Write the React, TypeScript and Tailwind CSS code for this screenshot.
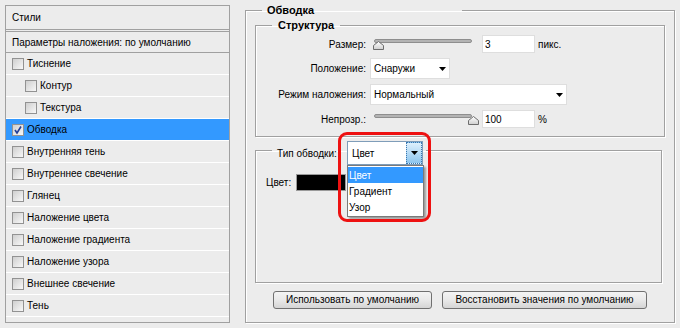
type StyleRow = { label: string; indent?: boolean; checked?: boolean };

const STYLE_ROWS: StyleRow[] = [
  { label: 'Тиснение' },
  { label: 'Контур', indent: true },
  { label: 'Текстура', indent: true },
  { label: 'Обводка', checked: true },
  { label: 'Внутренняя тень' },
  { label: 'Внутреннее свечение' },
  { label: 'Глянец' },
  { label: 'Наложение цвета' },
  { label: 'Наложение градиента' },
  { label: 'Наложение узора' },
  { label: 'Внешнее свечение' },
  { label: 'Тень' },
];

function CheckBox({ checked }: { checked?: boolean }) {
  return (
    <span className="flex items-center justify-center w-[12px] h-[12px] shrink-0 border border-[#929292] bg-linear-to-br from-[#cfcfcf] to-[#f8f8f8]">
      {checked && (
        <svg width="10" height="10" viewBox="0 0 10 10">
          <path d="M2 5 L4 8 L8 1.5" fill="none" stroke="#213e98" strokeWidth="1.6" />
        </svg>
      )}
    </span>
  );
}

function Arrow() {
  return (
    <svg width="7" height="4" viewBox="0 0 7 4" className="shrink-0">
      <path d="M0 0 H7 L3.5 4 Z" fill="#000" />
    </svg>
  );
}

// Photoshop style slider: dotted track with a house-shaped thumb
function Slider({ atEnd }: { atEnd?: boolean }) {
  return (
    <div className="relative w-[106px] h-[18px] shrink-0">
      <div className="absolute left-[1px] top-[4px] w-[98px] h-[4px] rounded-[2px] bg-[#b3b3b3] border border-[#8e8e8e]" />
      <svg
        width="11"
        height="9"
        viewBox="0 0 11 9"
        className={`absolute top-[6px] ${atEnd ? 'left-[95px]' : 'left-0'}`}
      >
        <defs>
          <linearGradient id={atEnd ? 'thumbB' : 'thumbA'} x1="0" y1="0" x2="0" y2="1">
            <stop offset="0" stopColor="#ffffff" />
            <stop offset="1" stopColor="#cfcfcf" />
          </linearGradient>
        </defs>
        <path
          d="M5.5 0.5 L10.5 4.5 V8.5 H0.5 V4.5 Z"
          fill={`url(#${atEnd ? 'thumbB' : 'thumbA'})`}
          stroke="#6d6d6d"
        />
      </svg>
    </div>
  );
}

function TextBox({ value }: { value: string }) {
  return (
    <div className="w-[53px] h-[18px] shrink-0 bg-white border border-[#dedede] flex items-center pl-[2px]">
      {value}
    </div>
  );
}

function Select({ value, width }: { value: string; width: string }) {
  return (
    <div className={`${width} h-[21px] shrink-0 bg-white border border-[#dedede] flex items-center pl-[3px] pr-[3px]`}>
      <span>{value}</span>
      <span className="ml-auto">
        <Arrow />
      </span>
    </div>
  );
}

function PsButton({ children, width }: { children: string; width: string }) {
  return (
    <button className={`${width} h-[18px] rounded-[3px] border border-[#707070] bg-linear-to-b from-[#f4f4f4] via-[#e9e9e9] to-[#d5d5d5] text-[10px] leading-none text-black`}>
      {children}
    </button>
  );
}

export default function App() {
  return (
    <div className="w-[680px] h-[328px] bg-[#ececec] flex items-start text-[10px] text-black font-['Liberation_Sans',Arial,sans-serif] overflow-hidden">
      {/* Styles list */}
      <div className="mt-[5px] ml-[5px] w-[225px] h-[318px] border border-[#a0a0a0] flex flex-col">
        <div className="h-[24px] pl-[6px] flex items-center border-b border-[#a0a0a0]">Стили</div>
        <div className="mt-[1px] h-[22px] pl-[6px] flex items-center border-t border-b border-[#a0a0a0]">
          Параметры наложения: по умолчанию
        </div>
        {STYLE_ROWS.map((row) => (
          <div
            key={row.label}
            className={`h-[22px] flex items-center gap-[3px] border-b border-white ${row.indent ? 'pl-[19px]' : 'pl-[6px]'} ${row.checked ? 'bg-[#3399ff]' : ''}`}
          >
            <CheckBox checked={row.checked} />
            <span>{row.label}</span>
          </div>
        ))}
      </div>

      {/* Stroke settings */}
      <fieldset className="ml-[15px] mt-[4px] w-[430px] h-[319px] border border-[#a0a0a0] px-[9px] shadow-[inset_1px_1px_0_#fff,1px_1px_0_#fff]">
        <legend className="ml-[7px] w-[200px] px-[5px] font-bold text-[11px] leading-[13px]">Обводка</legend>

        <fieldset className="mt-[2px] w-[410px] h-[118px] border border-[#a0a0a0] shadow-[inset_1px_1px_0_#fff,1px_1px_0_#fff]">
          <legend className="ml-[16px] px-[6px] font-bold text-[11px] leading-[13px]">Структура</legend>
          <div className="pt-[3px] flex flex-col gap-[5px]">
            <div className="flex items-center h-[18px]">
              <span className="w-[110px] text-right">Размер:</span>
              <span className="ml-[7px]">
                <Slider />
              </span>
              <span className="ml-[3px]">
                <TextBox value="3" />
              </span>
              <span className="ml-[3px]">пикс.</span>
            </div>
            <div className="flex items-center h-[21px]">
              <span className="w-[110px] text-right">Положение:</span>
              <span className="ml-[4px]">
                <Select value="Снаружи" width="w-[80px]" />
              </span>
            </div>
            <div className="flex items-center h-[21px]">
              <span className="w-[110px] text-right">Режим наложения:</span>
              <span className="ml-[4px]">
                <Select value="Нормальный" width="w-[197px]" />
              </span>
            </div>
            <div className="flex items-center h-[18px]">
              <span className="w-[110px] text-right">Непрозр.:</span>
              <span className="ml-[7px]">
                <Slider atEnd />
              </span>
              <span className="ml-[3px]">
                <TextBox value="100" />
              </span>
              <span className="ml-[3px]">%</span>
            </div>
          </div>
        </fieldset>

        <fieldset className="mt-[4px] w-[407px] h-[142px] border border-[#a0a0a0] shadow-[inset_1px_1px_0_#fff,1px_1px_0_#fff]">
          <legend className="ml-[16px] pl-[5px] pr-[3px] h-[18px]">
            <div className="flex items-center h-[24px]">
              <span className="w-[70px]">Тип обводки:</span>
              <div className="relative w-[76px] h-[24px] bg-white border border-[#7f9db9] flex items-center pl-[4px]">
                <span>Цвет</span>
                <span className="ml-auto w-[16px] h-full flex items-center justify-center border border-dotted border-[#3a78b0] bg-linear-to-b from-[#def0fc] to-[#8cc5ee]">
                  <Arrow />
                </span>

                {/* open dropdown list */}
                <div className="absolute z-10 left-[-1px] top-[23px] w-[77px] bg-white border border-[#7a7a7a] shadow-[2px_2px_2px_rgba(0,0,0,0.35)] py-[1px]">
                  <div className="h-[16px] pl-[1px] flex items-center bg-[#3399ff] text-white">Цвет</div>
                  <div className="h-[16px] pl-[1px] flex items-center">Градиент</div>
                  <div className="h-[16px] pl-[1px] flex items-center">Узор</div>
                </div>

                {/* red highlight ring */}
                <div className="absolute z-20 left-[-10px] top-[-10px] w-[93px] h-[90px] rounded-[9px] border-[3px] border-[#ee1111] pointer-events-none" />
              </div>
            </div>
          </legend>
          <div className="mt-[15px] pl-[10px] flex items-center gap-[2px]">
            <span className="w-[28px]">Цвет:</span>
            <div className="w-[50px] h-[17px] border border-[#9a9a9a] bg-black" />
          </div>
        </fieldset>

        <div className="mt-[8px] w-[410px] flex justify-center gap-[10px]">
          <PsButton width="w-[159px]">Использовать по умолчанию</PsButton>
          <PsButton width="w-[205px]">Восстановить значения по умолчанию</PsButton>
        </div>
      </fieldset>
    </div>
  );
}
